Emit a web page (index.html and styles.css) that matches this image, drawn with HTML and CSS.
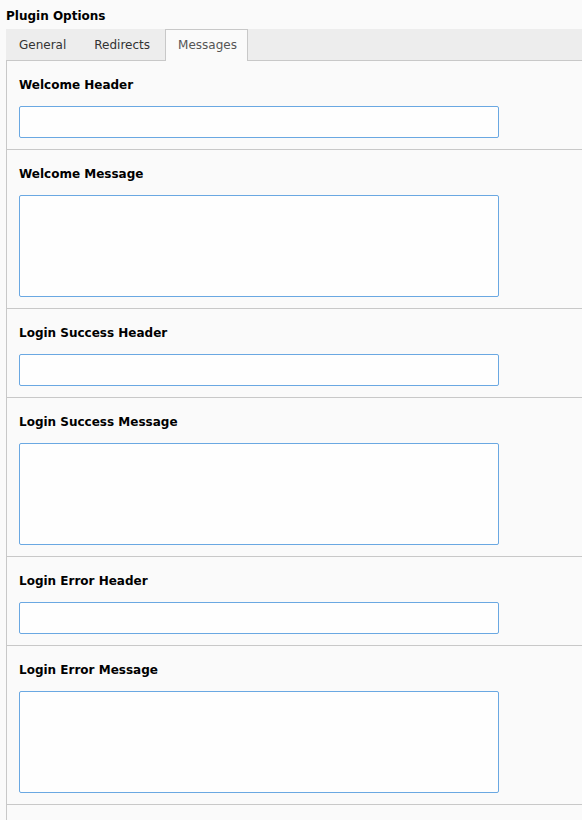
FILE: index.html
```html
<!DOCTYPE html>
<html>
<head>
<meta charset="utf-8">
<link rel="stylesheet" href="styles.css">
</head>
<body>
<div class="page">
  <h1 class="title">Plugin Options</h1>
  <div class="tabs">
    <div class="tab">General</div>
    <div class="tab">Redirects</div>
    <div class="tab active">Messages</div>
  </div>
  <div class="panel">
    <div class="field">
      <label class="label">Welcome Header</label>
      <div class="input"></div>
    </div>
    <div class="field">
      <label class="label">Welcome Message</label>
      <div class="input area"></div>
    </div>
    <div class="field">
      <label class="label">Login Success Header</label>
      <div class="input"></div>
    </div>
    <div class="field">
      <label class="label">Login Success Message</label>
      <div class="input area"></div>
    </div>
    <div class="field">
      <label class="label">Login Error Header</label>
      <div class="input"></div>
    </div>
    <div class="field">
      <label class="label">Login Error Message</label>
      <div class="input area"></div>
    </div>
    <div class="filler"></div>
  </div>
</div>
</body>
</html>
```
FILE: styles.css
```css
html, body {
  margin: 0;
  padding: 0;
  background: #fafafa;
  overflow: hidden;
}
body {
  font-family: "DejaVu Sans", Verdana, sans-serif;
  font-size: 12px;
  line-height: 18px;
  color: #000;
}
.page {
  padding: 7px 0 0 6px;
  width: 600px;
}
.title {
  margin: 0 0 4px 0;
  font-size: 12px;
  line-height: 18px;
  font-weight: bold;
  color: #000;
}
.tabs {
  display: flex;
  background: #ededed;
  border-bottom: 1px solid #c8c8c8;
  height: 31px;
}
.tab {
  padding: 6px 12px 7px 12px;
  border: 1px solid transparent;
  border-bottom: none;
  margin-right: 2px;
  color: #333;
  height: 18px;
  margin-bottom: -1px;
}
.tab.active {
  background: #fafafa;
  border-color: #c8c8c8;
  color: #555;
  padding-right: 10px;
}
.panel {
  border-left: 1px solid #c8c8c8;
}
.field {
  padding: 15px 12px 11px 12px;
  border-bottom: 1px solid #c8c8c8;
}
.filler {
  height: 40px;
}
.label {
  display: block;
  font-weight: bold;
  margin-bottom: 12px;
}
.input {
  width: 478px;
  height: 30px;
  background: #fefefe;
  border: 1px solid #6aa8e2;
  border-radius: 2px;
}
.input.area {
  height: 100px;
}
```
